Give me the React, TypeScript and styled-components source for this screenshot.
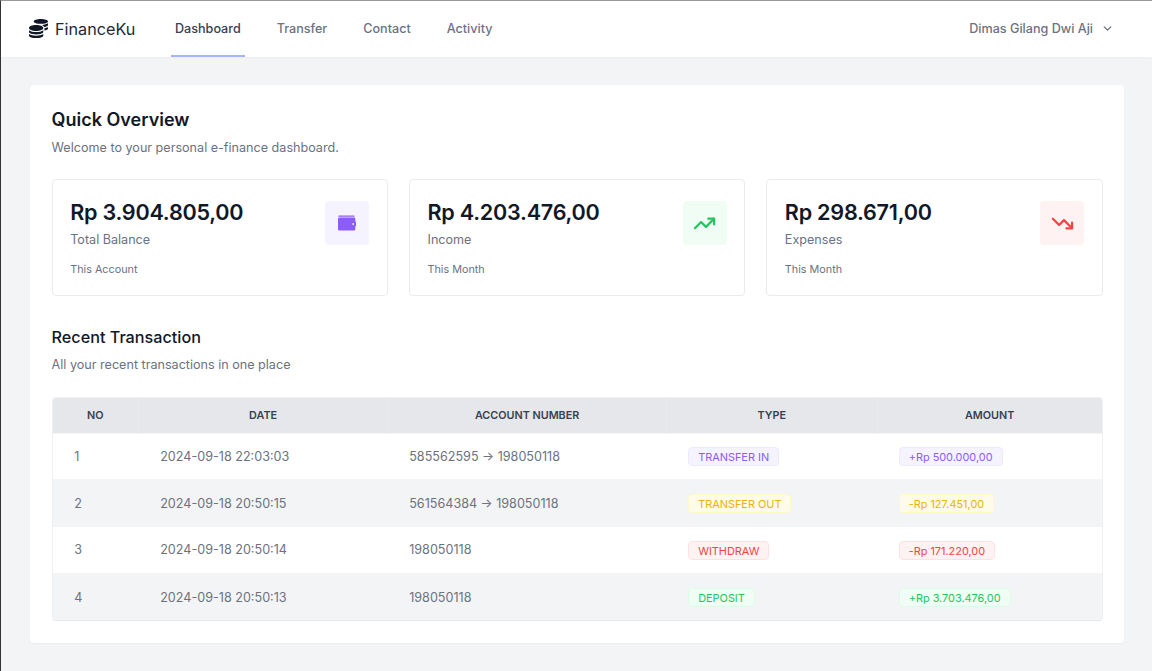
import React from 'react'
import styled, { createGlobalStyle } from 'styled-components'
import { ChevronDown, TrendingUp, TrendingDown } from 'lucide-react'
import { FaCoins } from 'react-icons/fa'

type Tone = 'purple' | 'yellow' | 'red' | 'green'

const tones = {
    purple: { bg: '#f5f3ff', border: '#ede9fe', text: '#8b5cf6' },
    yellow: { bg: '#fefce8', border: '#fef9c3', text: '#eab308' },
    red: { bg: '#fef2f2', border: '#fee2e2', text: '#ef4444' },
    green: { bg: '#f0fdf4', border: '#dcfce7', text: '#22c55e' },
}

const GlobalStyle = createGlobalStyle`
    html, body {
        margin: 0;
        padding: 0;
        height: 100%;
        background: #f3f4f6;
        font-family: Inter, "Liberation Sans", sans-serif;
    }
    * {
        box-sizing: border-box;
    }
`

const Page = styled.div`
    height: 671px;
    overflow: hidden;
    border-top: 1px solid #999;
    border-left: 1px solid #333;
    background: #f3f4f6;
`

const Navbar = styled.nav`
    height: 56px;
    background: #fff;
    display: flex;
    align-items: stretch;
    justify-content: space-between;
    padding: 0 38px 0 28px;
    box-shadow: 0 1px 2px rgba(0, 0, 0, 0.03);
`

const NavLeft = styled.div`
    display: flex;
    align-items: stretch;
`

const Brand = styled.div`
    display: flex;
    align-items: center;
    gap: 7px;
    width: 142px;
    font-size: 16.2px;
    color: #1f2937;
    svg {
        font-size: 19px;
        margin-bottom: 1px;
        color: #111827;
    }
`

const NavLinks = styled.div`
    display: flex;
    gap: 28px;
`

const NavLink = styled.a<{ $active?: boolean }>`
    display: flex;
    align-items: center;
    padding: 1px 4px 0;
    font-size: 12.6px;
    font-weight: 500;
    color: ${props => props.$active ? '#374151' : '#6b7280'};
    border-bottom: 2px solid ${props => props.$active ? '#a5b4fc' : 'transparent'};
`

const UserMenu = styled.div`
    display: flex;
    align-items: center;
    gap: 8px;
    font-size: 12.6px;
    font-weight: 500;
    color: #6b7280;
    margin-bottom: 2px;
    svg {
        stroke-width: 2.5;
    }
`

const Content = styled.main`
    padding: 28px 28px 0 29px;
`

const Panel = styled.section`
    background: #fff;
    border-radius: 4px;
    padding: 23px 21.4px 22px 21.6px;
    height: 558px;
    box-shadow: 0 1px 2px rgba(0, 0, 0, 0.04);
`

const Title = styled.h2`
    margin: 0;
    font-size: 18px;
    line-height: 24px;
    font-weight: 600;
    color: #111827;
`

const SectionTitle = styled.h3`
    margin: 0;
    font-size: 16.2px;
    line-height: 24px;
    font-weight: 500;
    color: #111827;
`

const Subtitle = styled.p`
    margin: 6px 0 0;
    font-size: 12.6px;
    line-height: 20px;
    color: #6b7280;
`

const Stats = styled.div`
    display: grid;
    grid-template-columns: repeat(3, 1fr);
    gap: 21px;
    margin-top: 21px;
    margin-bottom: 29px;
`

const StatCard = styled.div`
    height: 117px;
    border: 1px solid #e9ebee;
    border-radius: 4px;
    padding: 18px 17.5px 0 17.6px;
    display: flex;
    justify-content: space-between;
`

const StatValue = styled.div`
    font-size: 21.6px;
    line-height: 28px;
    font-weight: 600;
    letter-spacing: -0.25px;
    color: #111827;
`

const StatLabel = styled.div`
    margin-top: 4px;
    font-size: 12.6px;
    line-height: 20px;
    color: #6b7280;
`

const StatNote = styled.div`
    margin-top: 12px;
    font-size: 10.8px;
    line-height: 16px;
    color: #6b7280;
`

const StatIcon = styled.div<{ $tone: Tone }>`
    width: 44px;
    height: 44px;
    margin-top: 3px;
    border-radius: 4px;
    display: flex;
    align-items: center;
    justify-content: center;
    background: ${props => tones[props.$tone].bg};
    color: ${props => tones[props.$tone].text};
`

const TableWrap = styled.div`
    margin-top: 22px;
    border: 1px solid #eef0f2;
    border-bottom-color: #e5e7eb;
    border-radius: 4px;
    overflow: hidden;
`

const Table = styled.table`
    width: 100%;
    border-collapse: collapse;
    table-layout: fixed;
`

const HeadCell = styled.th<{ $width: number }>`
    width: ${props => props.$width}px;
    height: 35px;
    padding: 0;
    background: #e5e7eb;
    border-left: 1px solid #e9eaee;
    font-size: 10.8px;
    font-weight: 600;
    color: #374151;
    text-align: center;
    &:first-child {
        border-left: 0;
    }
`

const Row = styled.tr`
    height: 46.8px;
    border-top: 1px solid #f3f4f6;
    &:nth-child(even) {
        background: #f3f4f6;
    }
`

const Cell = styled.td`
    padding: 0 21.6px;
    font-size: 12.6px;
    color: #6b7280;
`

const Badge = styled.span<{ $tone: Tone }>`
    display: inline-block;
    margin-top: 1px;
    padding: 0 9px;
    height: 19px;
    line-height: 18px;
    border-radius: 4px;
    font-size: 10.9px;
    background: ${props => tones[props.$tone].bg};
    border: 1px solid ${props => tones[props.$tone].border};
    color: ${props => tones[props.$tone].text};
`

// wallet as in the reference: thin strip on top, body with a small clasp and a dot
const WalletIcon = () => (
    <svg width="18" height="17" viewBox="0 0 18 17" fill="currentColor">
        <path d="M1 0.4h15a0.6 0.6 0 0 1 0.6 0.6v0.8H0.4V1A0.6 0.6 0 0 1 1 0.4z" />
        <path
            fillRule="evenodd"
            d="M1.4 2.6H16a1.3 1.3 0 0 1 1.3 1.3V6.5H17.4a0.6 0.6 0 0 1 0.6 0.6v3.6a0.6 0.6 0 0 1-0.6 0.6H17.3v3a1.3 1.3 0 0 1-1.3 1.3H1.4A1.4 1.4 0 0 1 0 14.2V4A1.4 1.4 0 0 1 1.4 2.6zM15.2 8.1a0.9 0.9 0 1 0 0 1.8a0.9 0.9 0 0 0 0-1.8z"
        />
    </svg>
)

const stats: { value: string, label: string, note: string, tone: Tone, icon: React.ReactNode }[] = [
    { value: 'Rp 3.904.805,00', label: 'Total Balance', note: 'This Account', tone: 'purple', icon: <WalletIcon /> },
    { value: 'Rp 4.203.476,00', label: 'Income', note: 'This Month', tone: 'green', icon: <TrendingUp size={23} strokeWidth={2.3} /> },
    { value: 'Rp 298.671,00', label: 'Expenses', note: 'This Month', tone: 'red', icon: <TrendingDown size={23} strokeWidth={2.3} /> },
]

const transactions: { date: string, account: string, type: string, amount: string, tone: Tone }[] = [
    { date: '2024-09-18 22:03:03', account: '585562595 → 198050118', type: 'TRANSFER IN', amount: '+Rp 500.000,00', tone: 'purple' },
    { date: '2024-09-18 20:50:15', account: '561564384 → 198050118', type: 'TRANSFER OUT', amount: '-Rp 127.451,00', tone: 'yellow' },
    { date: '2024-09-18 20:50:14', account: '198050118', type: 'WITHDRAW', amount: '-Rp 171.220,00', tone: 'red' },
    { date: '2024-09-18 20:50:13', account: '198050118', type: 'DEPOSIT', amount: '+Rp 3.703.476,00', tone: 'green' },
]

const columns = [
    { label: 'NO', width: 86 },
    { label: 'DATE', width: 249 },
    { label: 'ACCOUNT NUMBER', width: 279 },
    { label: 'TYPE', width: 210.5 },
    { label: 'AMOUNT', width: 224.5 },
]

const App = () => (
    <Page>
        <GlobalStyle />
        <Navbar>
            <NavLeft>
                <Brand>
                    <FaCoins />
                    FinanceKu
                </Brand>
                <NavLinks>
                    <NavLink $active>Dashboard</NavLink>
                    <NavLink>Transfer</NavLink>
                    <NavLink>Contact</NavLink>
                    <NavLink>Activity</NavLink>
                </NavLinks>
            </NavLeft>
            <UserMenu>
                Dimas Gilang Dwi Aji
                <ChevronDown size={13} />
            </UserMenu>
        </Navbar>
        <Content>
            <Panel>
                <Title>Quick Overview</Title>
                <Subtitle>Welcome to your personal e-finance dashboard.</Subtitle>
                <Stats>
                    {stats.map(stat => (
                        <StatCard key={stat.label}>
                            <div>
                                <StatValue>{stat.value}</StatValue>
                                <StatLabel>{stat.label}</StatLabel>
                                <StatNote>{stat.note}</StatNote>
                            </div>
                            <StatIcon $tone={stat.tone}>{stat.icon}</StatIcon>
                        </StatCard>
                    ))}
                </Stats>
                <SectionTitle>Recent Transaction</SectionTitle>
                <Subtitle>All your recent transactions in one place</Subtitle>
                <TableWrap>
                    <Table>
                        <thead>
                            <tr>
                                {columns.map(col => (
                                    <HeadCell key={col.label} $width={col.width}>{col.label}</HeadCell>
                                ))}
                            </tr>
                        </thead>
                        <tbody>
                            {transactions.map((t, i) => (
                                <Row key={t.date}>
                                    <Cell>{i + 1}</Cell>
                                    <Cell>{t.date}</Cell>
                                    <Cell>{t.account}</Cell>
                                    <Cell><Badge $tone={t.tone}>{t.type}</Badge></Cell>
                                    <Cell><Badge $tone={t.tone}>{t.amount}</Badge></Cell>
                                </Row>
                            ))}
                        </tbody>
                    </Table>
                </TableWrap>
            </Panel>
        </Content>
    </Page>
)

export default App
